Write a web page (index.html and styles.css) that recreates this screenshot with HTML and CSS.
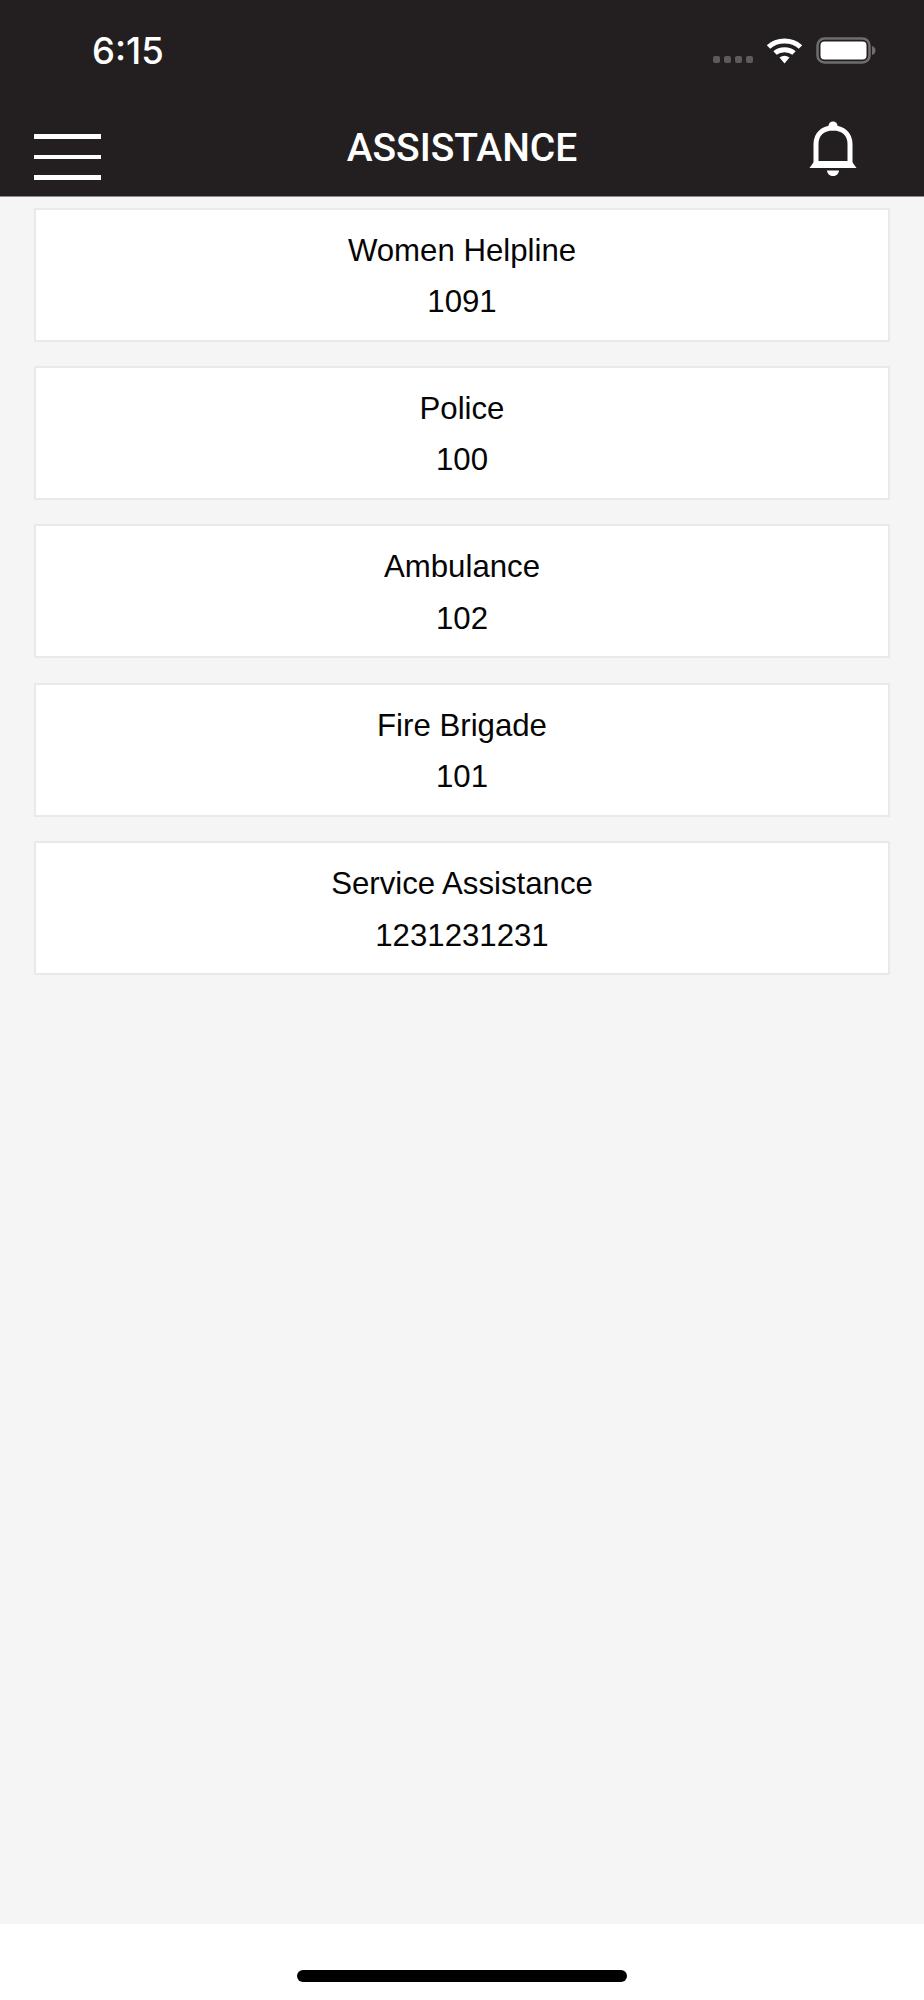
FILE: index.html
```html
<!DOCTYPE html>
<html lang="en">
<head>
<meta charset="utf-8">
<title>Assistance</title>
<link rel="stylesheet" href="styles.css">
</head>
<body>
<div class="screen">
  <header class="header">
    <div class="status">
      <span class="time">6:15</span>
      <div class="status-icons">
        <div class="signal"><i></i><i></i><i></i><i></i></div>
        <svg class="wifi" width="37" height="27" viewBox="0 0 37 27"><path d="M2.500 10C11 2 26 2 34.500 10" fill="none" stroke="#fff" stroke-width="5"/><path d="M9 16C14 11.500 23 11.500 28 16" fill="none" stroke="#fff" stroke-width="5"/><path d="M13.500 20.500Q18.500 17 23.500 20.500L18.500 26.500Z" fill="#fff"/></svg>
        <svg class="battery" width="60" height="27" viewBox="0 0 60 27"><rect x="1.500" y="1.500" width="52" height="24" rx="7" fill="none" stroke="#6f6d6e" stroke-width="2.500"/><rect x="4.500" y="4.500" width="46" height="18" rx="4" fill="#fff"/><path d="M56 9C58.500 9.500 59.500 11.500 59.500 13.500C59.500 15.500 58.500 17.500 56 18Z" fill="#6f6d6e"/></svg>
      </div>
    </div>
    <div class="nav">
      <div class="menu"><i></i><i></i><i></i></div>
      <h1 class="title">ASSISTANCE</h1>
      <div class="nav-end">
        <svg class="bell" width="48" height="56" viewBox="0 0 48 56"><circle cx="24" cy="5" r="4.500" fill="#fff"/><path d="M7 42V23C7 13 14 7 24 7C34 7 41 13 41 23V42" fill="none" stroke="#fff" stroke-width="5"/><path d="M0.500 47L5.500 40H42.500L47.500 47Z" fill="#fff"/><path d="M18 49.500H30C29.500 53.500 27 55 24 55C21 55 18.500 53.500 18 49.500Z" fill="#fff"/></svg>
      </div>
    </div>
  </header>
  <main class="list">
    <section class="card"><p class="name">Women Helpline</p><p class="number">1091</p></section>
    <section class="card"><p class="name">Police</p><p class="number">100</p></section>
    <section class="card"><p class="name">Ambulance</p><p class="number">102</p></section>
    <section class="card"><p class="name">Fire Brigade</p><p class="number">101</p></section>
    <section class="card"><p class="name">Service Assistance</p><p class="number">1231231231</p></section>
  </main>
  <footer class="home"><div class="home-bar"></div></footer>
</div>
</body>
</html>
```
FILE: styles.css
```css
* { box-sizing: border-box; }
html, body { margin: 0; padding: 0; }
body { background: #fff; font-family: "Liberation Sans", Arial, sans-serif; }
.screen { width: 924px; height: 2000px; display: flex; flex-direction: column; background: #f5f5f5; }
.header { height: 197px; flex: none; background: #231f20; border-bottom: 1px solid #8a8a8a; color: #fff; }
.status { height: 100px; padding: 0 48px 0 92px; display: flex; justify-content: space-between; align-items: center; }
.time { font-family: Inter, sans-serif; font-weight: 500; font-size: 36.500px; line-height: 100px; padding-top: 2px; }
.status-icons { display: flex; align-items: center; gap: 13px; }
.signal { display: flex; gap: 3.5px; margin-top: 19px; }
.signal i { width: 7.500px; height: 7.500px; border-radius: 2px; background: #5c5a5b; }
.nav { height: 96px; padding: 0 34px; display: grid; grid-template-columns: 1fr auto 1fr; align-items: center; }
.menu { width: 67px; display: flex; flex-direction: column; gap: 16px; margin-top: 18px; }
.menu i { display: block; height: 4.500px; background: #fff; }
.title { margin: 0; font-family: Roboto, sans-serif; font-weight: 500; font-size: 39px; line-height: 40px; }
.nav-end { display: flex; justify-content: flex-end; padding-right: 33px; }
.bell { margin-top: 2px; }
.list { flex: 1; padding: 10.500px 34px 0; display: flex; flex-direction: column; gap: 24.400px; }
.card { height: 134px; flex: none; background: #fff; border: 2px solid #e9e9e9; display: flex; flex-direction: column; align-items: center; padding-top: 23px; color: #050505; }
.name, .number { margin: 0; font-size: 31.200px; line-height: 36px; }
.number { margin-top: 15.500px; }
.home { height: 76px; flex: none; background: #fff; display: flex; justify-content: center; padding-top: 46px; }
.home-bar { width: 330px; height: 12px; border-radius: 6px; background: #000; }
```
